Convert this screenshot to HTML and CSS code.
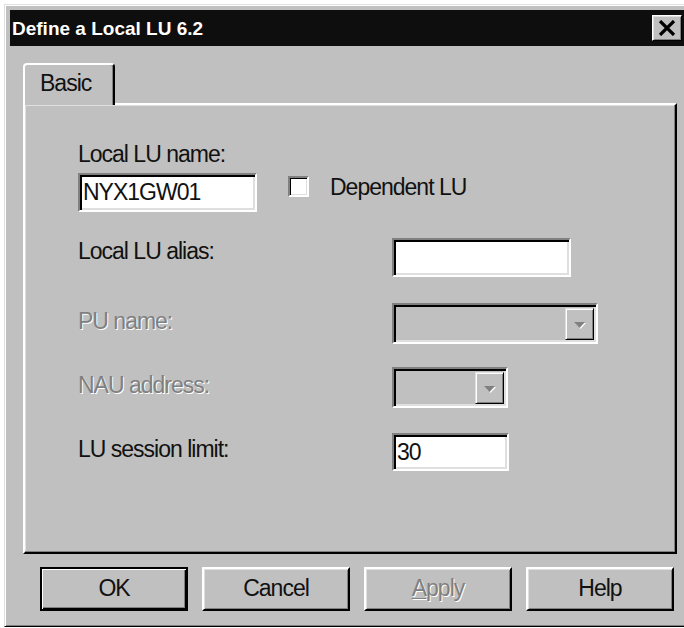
FILE: index.html
```html
<!DOCTYPE html>
<html lang="en">
<head>
<meta charset="utf-8">
<title>Define a Local LU 6.2</title>
<link rel="stylesheet" href="styles.css">
</head>
<body>
<div class="window">
  <div class="titlebar">
    <span class="title">Define a Local LU 6.2</span>
    <span class="close" aria-label="Close">
      <svg width="18" height="16" viewBox="0 0 18 16"><path d="M2 1 L16 15 M16 1 L2 15" stroke="#000" stroke-width="3.2" fill="none"/></svg>
    </span>
  </div>
  <div class="client">
    <div class="tabstrip">
      <div class="tab">Basic</div>
    </div>
    <div class="panel">
      <div class="lbl lbl-top">Local LU name:</div>
      <div class="row-name">
        <div class="edit edit-name">NYX1GW01</div>
        <span class="check"></span>
        <span class="lbl check-lbl">Dependent LU</span>
      </div>
      <div class="row row-alias">
        <span class="lbl">Local LU alias:</span>
        <div class="edit edit-alias"></div>
      </div>
      <div class="row row-pu">
        <span class="lbl disabled">PU name:</span>
        <div class="combo combo-pu">
          <span class="drop"><svg width="15" height="10" viewBox="0 0 15 10"><path d="M3 3 L14 3 L8.5 9 Z" fill="#fff"/><path d="M2 2 L13 2 L7.5 8 Z" fill="#808080"/></svg></span>
        </div>
      </div>
      <div class="row row-nau">
        <span class="lbl disabled">NAU address:</span>
        <div class="combo combo-nau">
          <span class="drop"><svg width="15" height="10" viewBox="0 0 15 10"><path d="M3 3 L14 3 L8.5 9 Z" fill="#fff"/><path d="M2 2 L13 2 L7.5 8 Z" fill="#808080"/></svg></span>
        </div>
      </div>
      <div class="row row-limit">
        <span class="lbl">LU session limit:</span>
        <div class="edit edit-limit">30</div>
      </div>
    </div>
    <div class="buttons">
      <span class="btn btn-default">OK</span>
      <span class="btn">Cancel</span>
      <span class="btn btn-disabled"><u>A</u>pply</span>
      <span class="btn">Help</span>
    </div>
  </div>
</div>
</body>
</html>
```
FILE: styles.css
```css
* { box-sizing: border-box; }

html, body {
  margin: 0;
  background: #fff;
  overflow: hidden;
}

body {
  font-family: "Liberation Sans", Arial, sans-serif;
  font-size: 23px;
  letter-spacing: -1px;
  color: #111;
}

/* window frame */
.window {
  margin: 4px 0 0 4px;
  width: 686px;
  background: #c0c0c0;
  border: 1px solid;
  border-color: #dfdfdf #000 #000 #dfdfdf;
  box-shadow: inset 1px 1px #fff, inset -1px -1px #808080;
  padding: 5px;
}

.titlebar {
  height: 36px;
  background: #0e0e0e;
  display: flex;
  align-items: center;
  justify-content: space-between;
  padding: 0 2px;
}

.title {
  color: #fff;
  font-weight: bold;
  font-size: 19px;
  letter-spacing: 0;
  line-height: 36px;
  padding-top: 2px;
}

.close {
  width: 30px;
  height: 26px;
  background: #c0c0c0;
  border: 1px solid;
  border-color: #fff #000 #000 #fff;
  box-shadow: inset 1px 1px #dfdfdf, inset -1px -1px #808080;
  display: flex;
  align-items: center;
  justify-content: center;
}

/* dialog body */
.client {
  padding: 17px 7px 10px 13px;
}

.tabstrip {
  height: 40px;
  display: flex;
  align-items: flex-end;
}

.tab {
  position: relative;
  z-index: 1;
  width: 92px;
  height: 42px;
  margin-bottom: -2px;
  background: #c0c0c0;
  border-top: 2px solid #fff;
  border-left: 2px solid #fff;
  border-right: 2px solid #000;
  border-radius: 4px 4px 0 0;
  box-shadow: inset -1px 0 #808080;
  padding: 6px 0 0 15px;
  line-height: 24px;
}

.panel {
  height: 451px;
  border: 2px solid;
  border-color: #fff #000 #000 #fff;
  box-shadow: inset -1px -1px #808080, inset 1px 1px #dfdfdf;
  padding: 37px 0 0 53px;
  display: flex;
  flex-direction: column;
}

.lbl {
  line-height: 24px;
  white-space: nowrap;
}

.lbl.disabled {
  color: #808080;
  text-shadow: 1px 1px 0 #fff;
}

.row-name {
  margin-top: 7px;
  display: flex;
  align-items: flex-start;
}

.edit {
  height: 39px;
  background: #fff;
  border: 2px solid;
  border-color: #808080 #fff #fff #808080;
  box-shadow: inset 2px 2px #000, inset -2px -2px #dfdfdf;
  padding: 0 0 0 3px;
  line-height: 35px;
}

.edit-name { width: 179px; }
.edit-alias { width: 179px; }
.edit-limit { width: 117px; height: 38px; line-height: 34px; }

.check {
  width: 21px;
  height: 21px;
  margin: 3px 0 0 31px;
  background: #fff;
  border: 2px solid;
  border-color: #808080 #fff #fff #808080;
  box-shadow: inset 1px 1px #000, inset -1px -1px #dfdfdf;
}

.check-lbl {
  margin: 2px 0 0 21px;
}

.row {
  display: grid;
  grid-template-columns: 314px auto;
  align-items: center;
  justify-items: start;
}

.row .lbl { margin-top: -6px; }
.row-alias .lbl { margin-top: -14px; }

.row-alias { margin-top: 26px; }
.row-pu { margin-top: 26px; }
.row-nau { margin-top: 23px; }
.row-limit { margin-top: 25px; }

.combo {
  height: 41px;
  border: 2px solid;
  border-color: #808080 #fff #fff #808080;
  box-shadow: inset 2px 2px #000, inset -2px -2px #dfdfdf;
  padding: 3px 2px 2px 2px;
  display: flex;
  justify-content: flex-end;
}

.combo-pu { width: 206px; }
.combo-nau { width: 116px; }

.drop {
  width: 29px;
  height: 100%;
  border: 1px solid;
  border-color: #dfdfdf #000 #000 #dfdfdf;
  box-shadow: inset 1px 1px #fff, inset -1px -1px #808080;
  display: flex;
  align-items: center;
  justify-content: center;
  padding-top: 2px;
}

/* push buttons */
.buttons {
  display: flex;
  gap: 14px;
  margin: 13px 0 0 17px;
}

.btn {
  width: 148px;
  height: 44px;
  border: 2px solid;
  border-color: #fff #000 #000 #fff;
  box-shadow: inset 1px 1px #dfdfdf, inset -1px -1px #808080;
  display: flex;
  align-items: center;
  justify-content: center;
  padding-bottom: 2px;
}

.btn-default {
  border-color: #000;
  box-shadow: inset 1px 1px #fff, inset -1px -1px #000, inset -2px -2px #808080;
}

.btn-disabled {
  color: #808080;
  text-shadow: 1px 1px 0 #fff;
}

.btn-disabled u {
  text-decoration-thickness: 1px;
  text-underline-offset: 2px;
}
```
